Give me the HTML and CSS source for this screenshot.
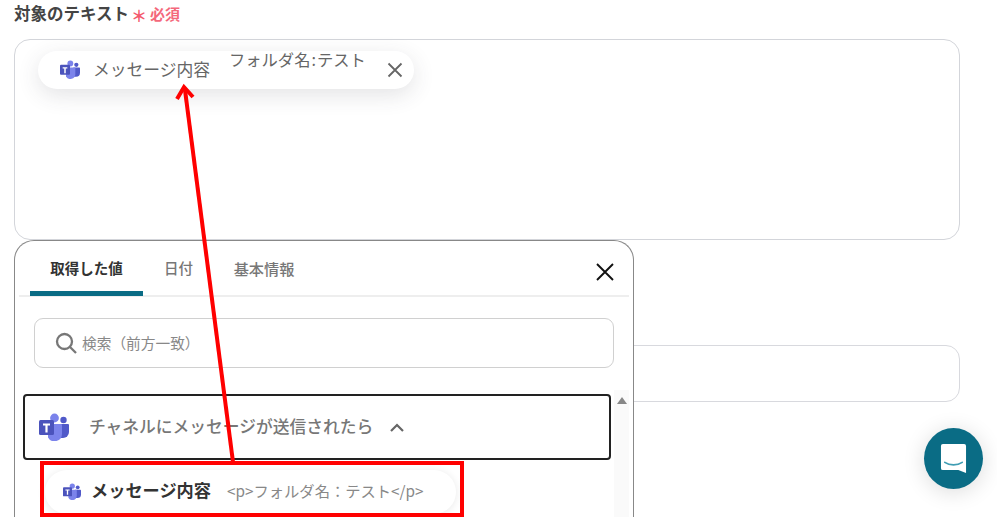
FILE: index.html
```html
<!DOCTYPE html>
<html lang="ja">
<head>
<meta charset="utf-8">
<title>対象のテキスト</title>
<link rel="stylesheet" href="styles.css">
</head>
<body>
<svg width="0" height="0" class="defs">
  <symbol id="teams" viewBox="0 0 30 28">
    <circle cx="15.5" cy="5" r="4.4" fill="#7b83eb"/>
    <circle cx="24.5" cy="7" r="3.2" fill="#5059c9"/>
    <path d="M20 11h9a1 1 0 0 1 1 1v7a6 6 0 0 1-6 6h-4z" fill="#5059c9"/>
    <path d="M9 11h13a1 1 0 0 1 1 1v9a7.500 7.500 0 0 1-14 3.500z" fill="#7b83eb"/>
    <rect x="0" y="7" width="15" height="15" rx="1.500" fill="#4b53bc"/>
    <path d="M4 10.500h7v2h-2.400v7h-2.200v-7h-2.400z" fill="#fff"/>
  </symbol>
</svg>
<main class="form">
  <div class="label-row">
    <span class="label">対象のテキスト</span><span class="star">＊</span><span class="req">必須</span>
  </div>
  <div class="textarea"></div>
  <div class="input"></div>
</main>

<div class="chip">
  <svg class="chip-icon"><use href="#teams"/></svg>
  <span class="chip-text">メッセージ内容</span>
  <span class="chip-float">フォルダ名<span class="colon">:</span>テスト</span>
  <svg class="chip-x" viewBox="0 0 16 16"><path d="M1.500 1.500l13 13M14.500 1.500l-13 13"/></svg>
</div>

<section class="panel">
  <div class="tabs">
    <span class="tab active">取得した値</span>
    <span class="tab">日付</span>
    <span class="tab">基本情報</span>
    <svg class="close" viewBox="0 0 18 18"><path d="M1 1l16 16M17 1L1 17"/></svg>
  </div>
  <div class="search">
    <svg class="search-icon" viewBox="0 0 22 22"><circle cx="9.500" cy="9.500" r="7.500"/><path d="M15 15l6 6"/></svg>
    <span class="search-text">検索（前方一致）</span>
  </div>
  <div class="list">
    <div class="list-main">
      <div class="group">
        <svg class="group-icon"><use href="#teams"/></svg>
        <span class="group-title">チャネルにメッセージが送信されたら</span>
        <svg class="chevron" viewBox="0 0 14 9"><path d="M1 8l6-6 6 6"/></svg>
      </div>
      <div class="item">
        <svg class="item-icon"><use href="#teams"/></svg>
        <span class="item-name">メッセージ内容</span>
        <span class="item-value">&lt;p&gt;フォルダ名：テスト&lt;/p&gt;</span>
      </div>
    </div>
    <div class="scrollbar"><span class="scroll-up"></span></div>
  </div>
</section>

<div class="highlight"></div>
<svg class="arrow" viewBox="0 0 997 517">
  <path d="M233 462L185 90"/>
  <path d="M177 99l7-12 9 10"/>
</svg>

<button class="chat" type="button" aria-label="チャット">
  <svg viewBox="0 0 28 32"><path d="M3 1h22a2 2 0 0 1 2 2v28l-8-3H3a2 2 0 0 1-2-2V3a2 2 0 0 1 2-2z" fill="#fff"/><path d="M5 20c5 3.500 13 3.500 18 0" fill="none" stroke="#3f9db3" stroke-width="1.800" stroke-linecap="round"/></svg>
</button>
</body>
</html>
```
FILE: styles.css
```css
* { box-sizing: border-box; }
html, body { margin: 0; height: 517px; overflow: hidden; background: #fff; }
body { font-family: "Noto Sans CJK JP", "Noto Sans", sans-serif; color: #333; position: relative; }
.defs { position: absolute; }

.form { padding: 1px 37px 0 14px; }
.label-row { display: flex; align-items: center; height: 24px; }
.label { font-size: 16.500px; font-weight: 700; color: #444; }
.star { color: #f4596c; font-size: 16px; line-height: 24px; margin: 4px 3px 0 2px; font-weight: 700; }
.req { color: #f4687b; font-size: 15px; font-weight: 700; }
.textarea { margin-top: 14px; height: 201px; border: 1px solid #d3d5da; border-radius: 16px; }
.input { margin-top: 105px; height: 57px; border: 1px solid #d8d9de; border-radius: 14px; }

.chip { position: absolute; left: 38px; top: 51px; width: 376px; height: 38px; border-radius: 19px; background: #fff; box-shadow: 0 6px 22px rgba(60, 60, 70, .14); display: flex; align-items: center; padding-left: 22px; }
.chip-icon { width: 20px; height: 19px; flex: none; margin-bottom: 2px; }
.chip-text { margin-left: 13px; font-size: 16.800px; line-height: 36px; padding-bottom: 2px; color: #666; white-space: nowrap; }
.chip-float { position: absolute; left: 191px; top: -4px; font-size: 16.300px; line-height: 24px; color: #666; white-space: nowrap; }
.colon { margin: 0 1px 0 1px; }
.chip-x { position: absolute; left: 349px; top: 11px; width: 16px; height: 16px; fill: none; stroke: #666; stroke-width: 1.800; }

.panel { position: absolute; left: 14px; top: 240px; width: 620px; height: 280px; background: #fff; border: 1px solid #888; border-bottom: 0; border-radius: 20px 20px 0 0; padding: 0 4px; }
.tabs { position: relative; display: flex; height: 56px; border-bottom: 2px solid #eee; padding-left: 11px; }
.tab { width: 113px; height: 55px; padding-top: 13px; text-align: center; font-size: 14.500px; line-height: 28px; font-weight: 500; color: #777; border-bottom: 5px solid transparent; border-radius: 5px 5px 0 0; }
.tab.active { color: #333; font-weight: 700; border-bottom-color: #0a6c85; }
.tab:nth-child(2) { width: 71px; }
.tab:nth-child(3) { width: 100px; font-size: 15.200px; }
.close { position: absolute; left: 577px; top: 22px; width: 18px; height: 18px; fill: none; stroke: #111; stroke-width: 1.900; }

.search { display: flex; align-items: center; height: 50px; margin: 21px 15px 0; border: 1px solid #d0d0d0; border-radius: 9px; padding-left: 20px; font-size: 14.700px; color: #888; }
.search-icon { width: 22px; height: 22px; margin-right: 5px; fill: none; stroke: #777; stroke-width: 2.300; flex: none; }
.search-text { padding-bottom: 2px; }

.list { display: flex; margin-top: 22px; height: 127px; }
.list-main { width: 595px; padding: 4px 3px 0 4px; }
.group { display: flex; align-items: center; height: 66px; border: 2px solid #222; border-radius: 4px; padding-left: 14px; }
.group-icon { width: 30px; height: 28px; flex: none; }
.group-title { margin-left: 20px; padding-bottom: 3px; font-size: 16.750px; font-weight: 500; color: #777; white-space: nowrap; }
.chevron { width: 14px; height: 9px; margin-left: 17px; fill: none; stroke: #666; stroke-width: 2.200; }
.item { display: flex; align-items: center; height: 44px; width: 411px; margin: 10px 0 0 22px; padding-left: 18px; border-radius: 22px; background: #fff; box-shadow: 0 1px 8px rgba(0, 0, 0, .09); }
.item-icon { width: 18px; height: 17px; flex: none; margin-bottom: 2px; }
.item-name { margin-left: 10px; padding-bottom: 5px; font-size: 17.200px; font-weight: 700; color: #333; white-space: nowrap; }
.item-value { margin-left: 16px; padding-bottom: 4px; font-size: 15.300px; color: #888; white-space: nowrap; }
.scrollbar { width: 15px; background: #fafafa; display: flex; justify-content: center; padding-top: 7px; }
.scroll-up { width: 0; height: 0; border: 5px solid transparent; border-top: 0; border-bottom: 7px solid #888; }

.highlight { position: absolute; left: 40px; top: 461px; width: 424px; height: 56px; border: 4px solid #f00; }
.arrow { position: absolute; left: 0; top: 0; width: 997px; height: 517px; fill: none; stroke: #f00; stroke-width: 4; pointer-events: none; }

.chat { position: absolute; left: 924px; top: 428px; width: 59px; height: 61px; border: 0; padding: 0; border-radius: 50%; background: #0a6c85; box-shadow: 0 3px 22px rgba(0, 0, 0, .14); display: flex; align-items: center; justify-content: center; }
.chat svg { width: 27px; height: 31px; }
```
